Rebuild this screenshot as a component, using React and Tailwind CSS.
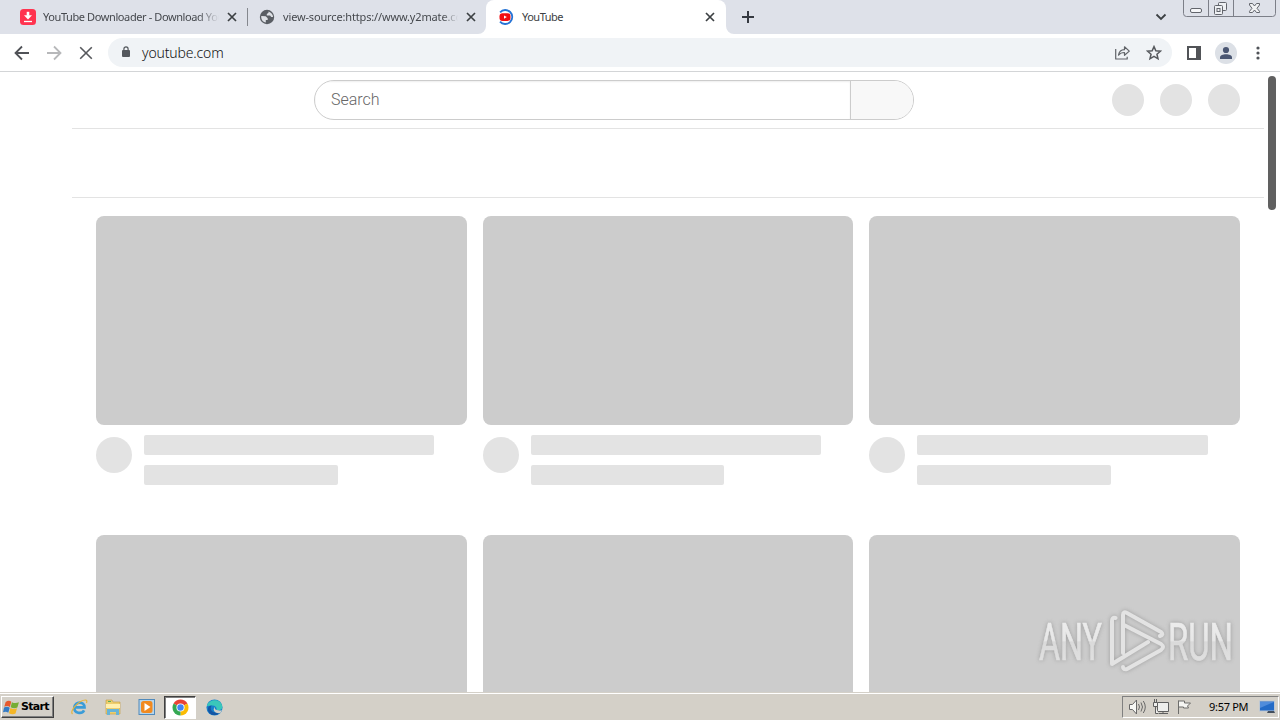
import React from "react";

const uiFont = "font-['Noto_Sans','Open_Sans',sans-serif]";

function CloseX({ className = "" }) {
  return (
    <svg className={`size-[10px] shrink-0 ${className}`} viewBox="0 0 10 10" stroke="#3c4043" strokeWidth="1.7" fill="none">
      <path d="M1 1l8 8M9 1L1 9" />
    </svg>
  );
}

function DownloadIcon() {
  return (
    <svg className="size-4 shrink-0" viewBox="0 0 16 16">
      <rect width="16" height="16" rx="3.5" fill="#ff334f" />
      <path d="M8 2.800v4" stroke="#fff" strokeWidth="2.600" />
      <path d="M4 6.300h8L8 10.500z" fill="#fff" />
      <path d="M4 12.500h8" stroke="#fff" strokeWidth="1.300" />
    </svg>
  );
}

function GlobeIcon() {
  return (
    <svg className="size-4 shrink-0" viewBox="0 0 16 16">
      <circle cx="8" cy="8" r="7.200" fill="#5a5e64" />
      <path d="M2.200 7l4.500.2 2 2v1.800H6.800v2.600C3.800 13 2 10.500 2.200 7zM9.500 2.400v1.300L7.800 4.900v1.500h3.300l1.100 1.700h1.900C14 5.500 12.300 3.300 9.500 2.400z" fill="#dee1e6" />
    </svg>
  );
}

function LoadingYouTube() {
  return (
    <svg className="size-4 shrink-0" viewBox="0 0 16 16">
      <path d="M2.100 3.300A7 7 0 1 1 2 12.600" fill="none" stroke="#2573d5" strokeWidth="1.8" />
      <rect x="1.500" y="4.300" width="11" height="7.600" rx="3" fill="#f20d12" />
      <path d="M6 6.500l2.800 1.600L6 9.700z" fill="#fff" />
    </svg>
  );
}

function TabBar() {
  return (
    <div className="flex h-[34px] bg-[#dee1e9]">
      <div className="flex w-[247px] shrink-0 items-center pl-5">
        <DownloadIcon />
        <span className={`ml-[7px] w-[176px] whitespace-nowrap text-[11px] tracking-[-0.400px] text-[#45484d] [mask-image:linear-gradient(to_right,black_88%,transparent_100%)] ${uiFont}`}>YouTube Downloader - Download You</span>
        <CloseX className="ml-[8px]" />
      </div>
      <div className="mt-2 h-[18px] w-px bg-[#85888e]" />
      <div className="flex w-[238px] shrink-0 items-center rounded-br-lg pl-[11px]">
        <GlobeIcon />
        <span className={`ml-[8px] w-[175px] whitespace-nowrap text-[11px] tracking-[-0.150px] text-[#45484d] [mask-image:linear-gradient(to_right,black_91%,transparent_100%)] ${uiFont}`}>view-source:https://www.y2mate.co</span>
        <CloseX className="ml-[8px]" />
      </div>
      <div className="relative flex w-[240px] shrink-0 items-center rounded-t-lg bg-white pl-3">
        <svg className="absolute bottom-0 -left-2 size-2" viewBox="0 0 8 8"><path d="M8 0v8H0a8 8 0 0 0 8-8" fill="white" /></svg>
        <svg className="absolute -right-2 bottom-0 size-2" viewBox="0 0 8 8"><path d="M0 0v8h8a8 8 0 0 1-8-8" fill="white" /></svg>
        <LoadingYouTube />
        <span className={`ml-[8px] w-[175px] text-[11px] tracking-[-0.500px] text-[#3c4043] ${uiFont}`}>YouTube</span>
        <CloseX className="ml-[8px]" />
      </div>
      <svg className="mt-[11px] ml-4 size-3 shrink-0" viewBox="0 0 12 12" stroke="#353941" strokeWidth="2"><path d="M6 0v12M0 6h12" /></svg>
      <svg className="mt-[13px] mr-4 ml-auto h-2 w-3" viewBox="0 0 12 8" fill="none" stroke="#3c4043" strokeWidth="1.800"><path d="M1.500 1.500L6 6l4.500-4.500" /></svg>
      <svg className="mr-[4px] h-[17px] w-[93px]" viewBox="0 0 93 17" fill="none" stroke="#62656c">
        <path d="M.5 0v13.500q0 3 3 3h86q3 0 3-3V0M25.500 0v16M50.500 0v16" stroke="#7c7f88" />
        <rect x="7.500" y="8.500" width="11" height="4" rx="1.500" fill="#f5f6f8" />
        <rect x="35.500" y="2.500" width="8" height="8" rx="1" fill="#eef0f3" />
        <rect x="31.500" y="5.500" width="8" height="9" rx="1" fill="#eef0f3" />
        <rect x="34" y="8.500" width="3" height="3" />
        <path d="M66.500 3.500h3l2 2.500 2-2.500h3v1.500L74 8.300l2.500 3v1.200h-3l-2-2.500-2 2.500h-3v-1.200l2.500-3L66.500 5z" fill="#f1f2f4" />
      </svg>
    </div>
  );
}

function Toolbar() {
  return (
    <div className="flex h-[38px] items-center border-b border-[#d3d5d7] bg-white pl-[14px]">
      <svg className="size-4" viewBox="0 0 16 16" fill="none" stroke="#505257" strokeWidth="1.800"><path d="M15 8H2M8 1.500L1.500 8 8 14.500" /></svg>
      <svg className="ml-4 size-4" viewBox="0 0 16 16" fill="none" stroke="#b7b8ba" strokeWidth="1.800"><path d="M1 8h13M8 1.500L14.500 8 8 14.500" /></svg>
      <svg className="ml-4 size-4" viewBox="0 0 16 16" fill="none" stroke="#56585c" strokeWidth="1.600"><path d="M2.200 2.200l11.600 11.600M13.800 2.200L2.200 13.800" /></svg>
      <div className="ml-[14px] flex h-[29px] w-[1064px] items-center rounded-full bg-[#f0f3f6] pl-[14px]">
        <svg className="-mt-[2px] h-[11px] w-[8px]" viewBox="0 0 8 11"><rect y="4" width="8" height="7" rx="1" fill="#54585d" /><path d="M1.900 5V3a2.100 2.100 0 0 1 4.200 0v2" fill="none" stroke="#54585d" strokeWidth="1.200" /></svg>
        <span className={`ml-[12px] text-[14px] font-light tracking-[-0.150px] text-[#111] ${uiFont}`}>youtube.com</span>
        <svg className="mr-[15px] ml-auto size-[17px]" viewBox="0 0 17 17" fill="none" stroke="#606368" strokeWidth="1.200" strokeLinejoin="round">
          <path d="M1.700 5v10h11.500v-2.300M4.500 11.200c.6-3.800 2.800-5.500 6-5.500V2.800l4.800 4.300-4.800 4.200V8.500c-2.500 0-4.500.7-6 2.700z" />
        </svg>
        <svg className="mr-[10px] size-4" viewBox="0 0 16 16" fill="none" stroke="#56595d" strokeWidth="1.500"><path d="M8 1.600l1.850 4.200 4.600.4-3.500 3.050 1.050 4.550L8 11.400l-4 2.400 1.050-4.550-3.500-3.050 4.600-.4z" /></svg>
      </div>
      <svg className="ml-[15px] h-[14px] w-[14px]" viewBox="0 0 14 14"><rect x="1" y="1" width="12" height="12" fill="white" stroke="#515357" strokeWidth="2" /><path d="M9 0h5v14H9z" fill="#515357" /></svg>
      <svg className="ml-[14px] size-[22px]" viewBox="0 0 22 22"><circle cx="11" cy="11" r="11" fill="#dce0e6" /><circle cx="11" cy="8" r="3.100" fill="#4a5672" /><path d="M5 17v-1.500C5 13 8 12.200 11 12.200s6 .8 6 3.300V17z" fill="#4a5672" /></svg>
      <svg className="ml-[19px] h-4 w-1" viewBox="0 0 4 16" fill="#505358"><circle cx="2" cy="3" r="1.600" /><circle cx="2" cy="8" r="1.600" /><circle cx="2" cy="13" r="1.600" /></svg>
    </div>
  );
}

function VideoPlaceholder() {
  return (
    <div className="min-w-0 flex-1">
      <div className="h-[209px] rounded-lg bg-[#ccc]" />
      <div className="mt-[10px] flex h-[100px] gap-3">
        <div className="mt-[2px] size-9 shrink-0 rounded-full bg-[#e3e3e3]" />
        <div className="flex-1">
          <div className="h-5 w-[90%] rounded-xs bg-[#e3e3e3]" />
          <div className="mt-[10px] h-5 w-[60%] rounded-xs bg-[#e3e3e3]" />
        </div>
      </div>
    </div>
  );
}

function Watermark() {
  return (
    <svg className="absolute top-[532px] left-[1032px] h-[76px] w-[216px] drop-shadow-[0_0_2px_rgba(100,100,100,0.450)]" viewBox="0 0 216 76">
      <defs>
        <linearGradient id="sheen" x1="0" y1="18" x2="0" y2="56" gradientUnits="userSpaceOnUse">
          <stop offset="0" stopColor="#ececec" />
          <stop offset=".5" stopColor="#e7e7e7" />
          <stop offset=".52" stopColor="#dadada" />
          <stop offset="1" stopColor="#e0e0e0" />
        </linearGradient>
      </defs>
      <g fill="url(#sheen)" stroke="url(#sheen)" strokeWidth=".7" fontFamily="Roboto, sans-serif" fontSize="52">
        <text x="7" y="55.500" textLength="63" lengthAdjust="spacingAndGlyphs">ANY</text>
        <text x="136" y="55.500" textLength="65" lengthAdjust="spacingAndGlyphs">RUN</text>
      </g>
      <g fill="none" stroke="#e3e3e3" strokeWidth="4" strokeLinecap="round" strokeLinejoin="round">
        <path d="M83.500 14q-3.500-1-3.500 3v43l36-22M91 49V11q0-4 4-2l34 19q3 3-1 4M92 21l37 19q4 3 0 6L95 65q-4 1-4-2" />
      </g>
    </svg>
  );
}

function Page() {
  return (
    <div className="relative flex h-[620px] overflow-hidden bg-white pl-[72px]">
      <div className="w-[1192px] shrink-0">
        <header className="flex h-[57px] items-center border-b border-[#e3e3e3] pr-6 pl-[242px]">
          <div className="flex h-10 w-[600px] overflow-hidden rounded-full border border-[#ccc]">
            <div className="flex w-[536px] items-center border-r border-[#ccc] pl-4 shadow-[inset_0_1px_2px_#eee]">
              <span className="font-['Roboto',sans-serif] text-base font-light tracking-[0px] text-[#666]">Search</span>
            </div>
            <div className="flex-1 bg-[#f8f8f8]" />
          </div>
          <div className="ml-auto flex gap-4">
            <div className="size-8 rounded-full bg-[#e3e3e3]" />
            <div className="size-8 rounded-full bg-[#e3e3e3]" />
            <div className="size-8 rounded-full bg-[#e3e3e3]" />
          </div>
        </header>
        <div className="h-[69px] border-b border-[#e3e3e3]" />
        <div className="mt-[18px] flex flex-col pr-6 pl-6">
          <div className="flex gap-4"><VideoPlaceholder /><VideoPlaceholder /><VideoPlaceholder /></div>
          <div className="flex gap-4"><VideoPlaceholder /><VideoPlaceholder /><VideoPlaceholder /></div>
        </div>
      </div>
      <div className="mt-1 ml-1 h-[134px] w-2 rounded-full bg-[#606060]" />
      <Watermark />
    </div>
  );
}

function Taskbar() {
  return (
    <footer className="flex h-7 items-center border-t border-[#d4d0c8] bg-[#d4d0c8] pt-px shadow-[inset_0_1px_0_white]">
      <button className="ml-px flex h-[22px] w-[53px] items-center border border-t-white border-r-[#404040] border-b-[#404040] border-l-white pl-[1px] shadow-[inset_-1px_-1px_0_#808080]">
        <svg className="size-[17px] shrink-0" viewBox="0 0 16 16">
          <path d="M2.500 2.800q3-2 5.300-.2L6.500 7.500Q4 6 1.200 7.300z" fill="#e7592d" />
          <path d="M8.400 3q3 1.700 6.600.1L13.500 8q-3 1.500-6.300-.2z" fill="#75ad35" />
          <path d="M1 8q3-1.300 5.300.2L5 13Q3 11.300 0 12.500z" fill="#347bc4" />
          <path d="M7 8.500q3 1.700 6.200.2L11.800 13.700q-3 1.500-6.200-.4z" fill="#f4b626" />
        </svg>
        <span className="ml-px font-['DejaVu_Sans',sans-serif] text-[11px] font-bold tracking-[-0.700px] text-black">Start</span>
      </button>
      <svg className="ml-[16px] size-[18px]" viewBox="0 0 18 18" fill="none">
        <path d="M4.300 9.400h10.200C14.500 3 5 3 4.300 9.400c-.3 6.300 7.500 7 9.800 3" stroke="#3a9cd8" strokeWidth="2.700" />
        <path d="M2.500 16C-.5 13 9 2 15.500 2q2 0 1 3" stroke="#e5b43b" strokeWidth="1.200" />
      </svg>
      <svg className="ml-[16px] size-[18px]" viewBox="0 0 18 18">
        <path d="M2 2h6l1 2h7v12H2z" fill="#edce6d" stroke="#c49b3f" strokeWidth=".6" />
        <path d="M2 6h14v4H2z" fill="#fff0ae" /><path d="M3 17v-6h12v6h-3v-3H6v3z" fill="#68b4d7" /><path d="M4 3h3v1H4z" fill="#5aae57" />
      </svg>
      <svg className="ml-[16px] size-[18px]" viewBox="0 0 18 18">
        <rect x="1" y="1.500" width="15.500" height="15" fill="#b6d5eb" stroke="#518abb" />
        <rect x="3" y="3" width="11.500" height="12" rx="2.500" fill="#f18a20" /><path d="M6.500 5l6 4-6 4z" fill="white" />
      </svg>
      <div className="ml-[8px] flex h-[23px] w-8 items-center justify-center border border-t-[#404040] border-r-white border-b-white border-l-[#404040] bg-white shadow-[inset_1px_1px_0_#808080]">
        <svg className="size-[17px]" viewBox="0 0 18 18">
          <path d="M9 9L1.640 4.750A8.500 8.500 0 0 1 16.360 4.750z" fill="#e94335" />
          <path d="M9 9l7.360-4.250A8.500 8.500 0 0 1 9 17.500z" fill="#fbbc04" />
          <path d="M9 9v8.500A8.500 8.500 0 0 1 1.640 4.750z" fill="#35a853" />
          <circle cx="9" cy="9" r="4.300" fill="white" /><circle cx="9" cy="9" r="3.400" fill="#4285f4" />
        </svg>
      </div>
      <svg className="ml-[10px] size-[17px]" viewBox="0 0 18 18">
        <circle cx="9" cy="9" r="8.500" fill="#1680cc" />
        <path d="M1 7C3 0 15-1 17 7c1 4-2 5-6 5 1-3-1-5-4-5-3 0-6 1-6 0z" fill="#3ac7ba" />
        <path d="M6 7c-3 4 1 9 9 7-5 6-13 2-13-3 0-3 2-4 4-4z" fill="#1556a4" />
        <path d="M10 8c-2 2 0 5 7 4l-2 3c-6 1-9-4-5-7z" fill="#d4d0c8" />
      </svg>
      <div className="mr-px ml-auto flex h-[22px] w-[157px] items-center border border-t-[#808080] border-r-white border-b-white border-l-[#808080] pl-[6px]">
        <svg className="h-4 w-[17px]" viewBox="0 0 17 16" fill="#f7f7f4" stroke="#686868" strokeWidth="1">
          <path d="M.5 5.500h3L7.500 1v14l-4-4.500h-3z" /><path d="M9.500 5q2 3 0 6M12 3.500q3 4.500 0 9M14.300 2q4 6 0 12" fill="none" />
        </svg>
        <svg className="ml-[7px] size-4" viewBox="0 0 16 16" fill="#eeeeec" stroke="#5f5f5f">
          <path d="M4.500 3.500h11v9h-11zM6 14.500h9M10 12.500v2" /><path d="M.5 3.500h4v4h-4zM1.500 3V0M3.500 3V0M2.500 7.500v7h3" />
        </svg>
        <svg className="ml-[7px] size-4" viewBox="0 0 16 16" fill="#f5f5f2" stroke="#6d6d6b"><path d="M2.500 15V1.500M2.500 2h6v2h6l-3 3 1 2h-5V8h-5z" /></svg>
        <span className={`ml-[17px] whitespace-nowrap text-[11px] tracking-[-0.300px] text-black ${uiFont}`}>9:57 PM</span>
        <svg className="mr-[3px] ml-auto size-4" viewBox="0 0 16 16"><rect x=".5" y="2" width="15" height="10" fill="#246bc7" stroke="#bdc8d4" /><path d="M1 3h14L1 9z" fill="#508cdb" /><path d="M9 12h6l1 2H8z" fill="#434e5c" /></svg>
      </div>
    </footer>
  );
}

export default function App() {
  return (
    <div className="flex h-[720px] w-[1280px] flex-col overflow-hidden bg-white">
      <TabBar />
      <Toolbar />
      <Page />
      <Taskbar />
    </div>
  );
}
